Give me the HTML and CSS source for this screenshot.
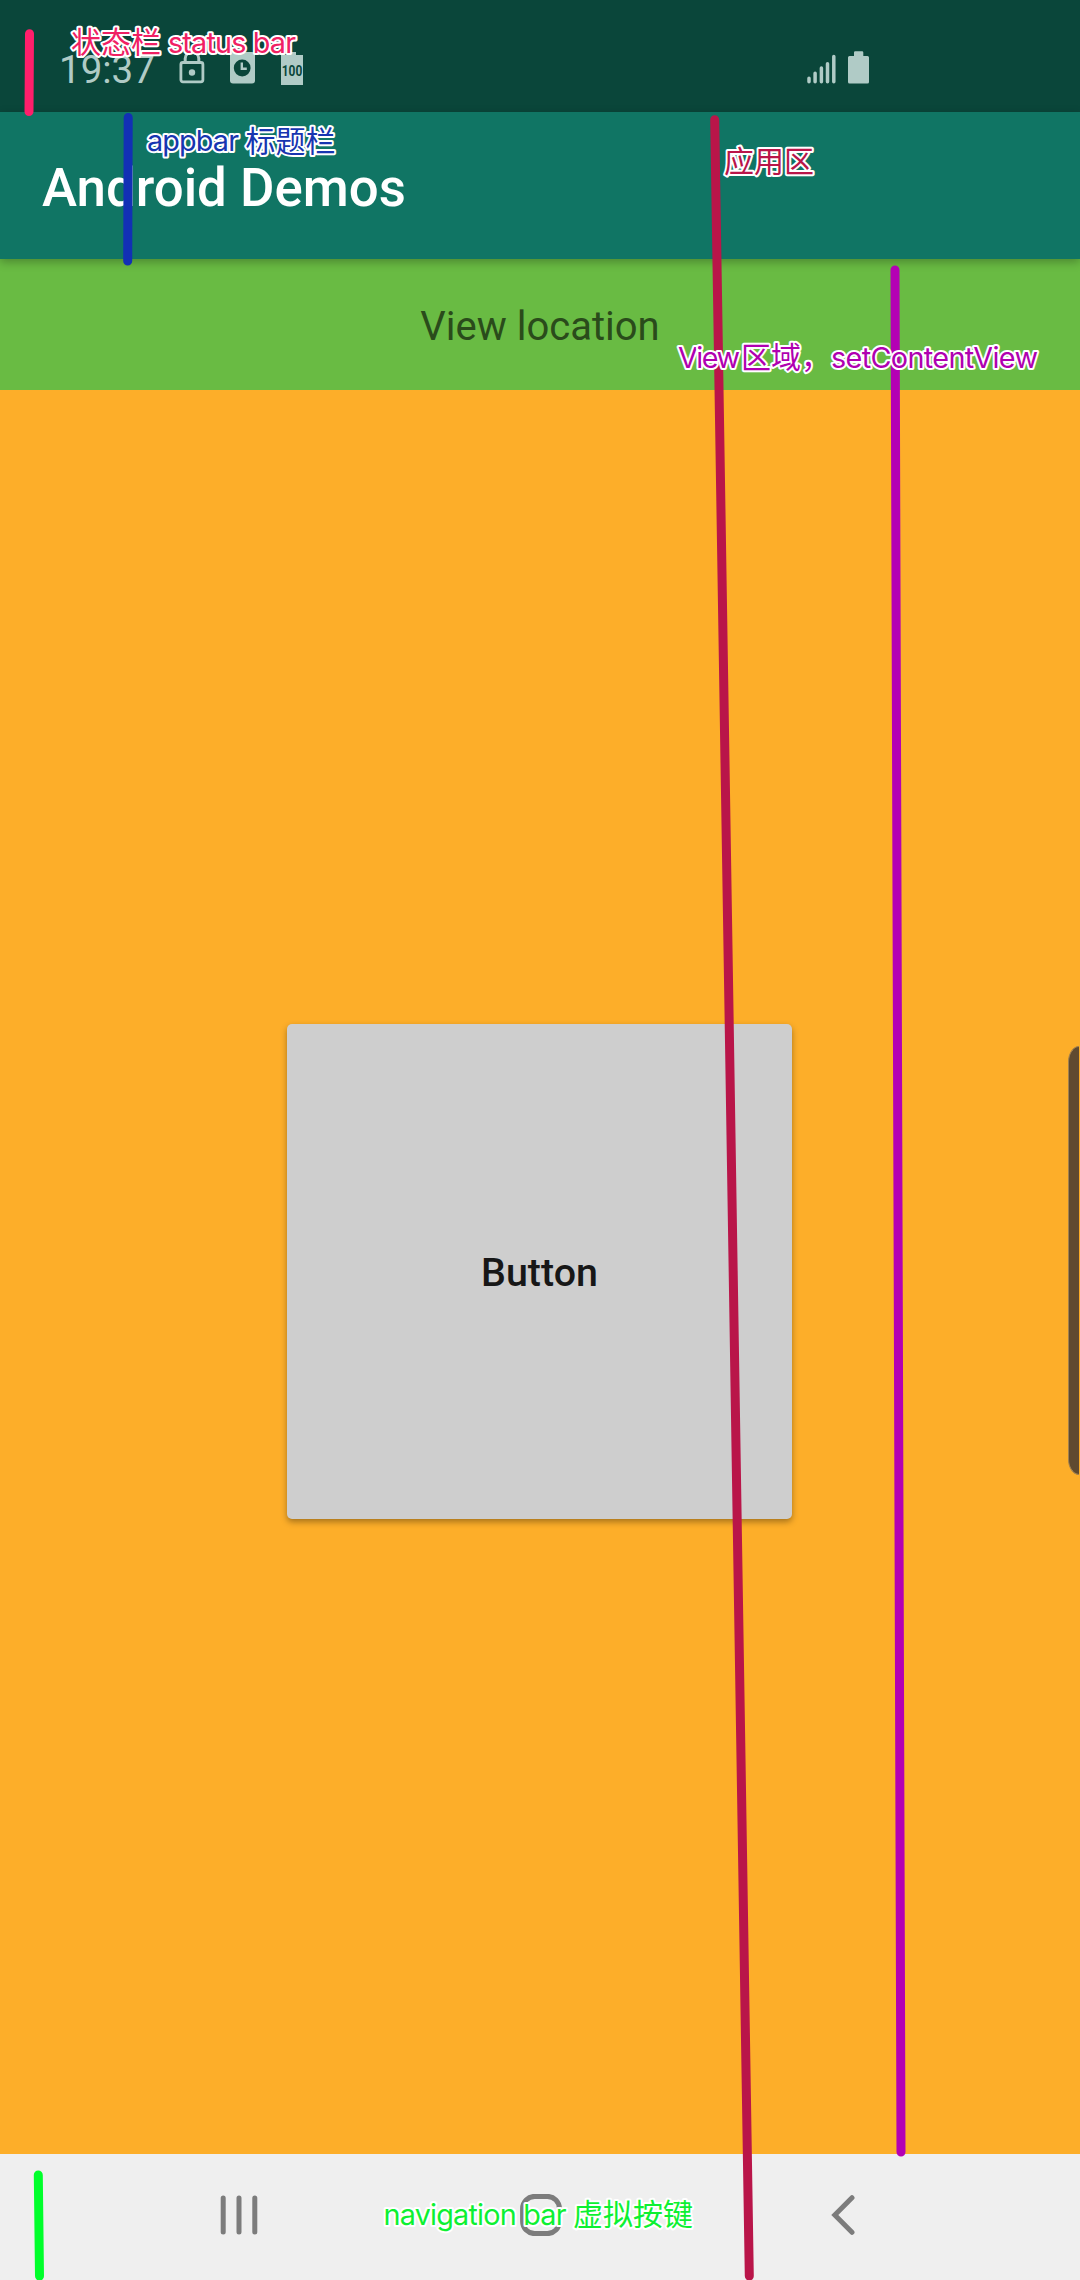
FILE: index.html
```html
<!DOCTYPE html>
<html lang="zh-CN">
<head>
<meta charset="utf-8">
<title>Android Demos</title>
<link rel="stylesheet" href="styles.css">
</head>
<body>
<div class="screen">
  <header class="status-bar">
    <span class="clock">19:37</span>
    <svg class="icon-lock" width="26" height="34" viewBox="0 0 26 34">
      <path d="M6.2 12V8.5a6.8 6.8 0 0 1 13.6 0V12" fill="none" stroke="currentColor" stroke-width="3"/>
      <rect x="1.9" y="12.5" width="22" height="19.3" rx="2" fill="none" stroke="currentColor" stroke-width="2.8"/>
      <circle cx="13" cy="22.5" r="3.2" fill="currentColor"/>
    </svg>
    <svg class="icon-alarm" width="25" height="34" viewBox="0 0 25 34">
      <rect x="0" y="2" width="25" height="31.5" rx="3" fill="currentColor"/>
      <circle cx="12.2" cy="18" r="8.4" class="cutout"/>
      <path d="M11.8 12.5v6.2h5" fill="none" stroke="currentColor" stroke-width="2.4"/>
    </svg>
    <svg class="icon-level" width="22" height="34" viewBox="0 0 22 34">
      <path d="M0 4h7V1h8v3h7v30H0z" fill="currentColor"/>
      <text x="11" y="24.500" textLength="20.500" lengthAdjust="spacingAndGlyphs" text-anchor="middle" class="level-text">100</text>
    </svg>
    <svg class="icon-signal" width="29" height="34" viewBox="0 0 29 34">
      <path d="M2 28.2v3.6M8.1 23.3v8.5M14.4 18v13.8M20.5 13.8v18M26.8 6.5v25.3" stroke="currentColor" stroke-width="3.5" stroke-linecap="round"/>
    </svg>
    <svg class="icon-battery" width="21" height="34" viewBox="0 0 21 34">
      <path d="M6 6V2.5q0-1.2 1.2-1.2h6.9q1.2 0 1.2 1.2V6H19.500q1.500 0 1.500 1.500V32q0 1.600-1.500 1.600H1.500Q0 33.600 0 32V7.500Q0 6 1.500 6z" fill="currentColor"/>
    </svg>
  </header>
  <div class="app-bar"><h1 class="app-title">Android Demos</h1></div>
  <div class="location">View location</div>
  <main class="content"><button class="big-button">Button</button></main>
  <nav class="nav-bar">
    <svg width="38" height="42" viewBox="0 0 38 42">
      <path d="M3.200 4v34M19 4v34M34.800 4v34" class="nav-stroke"/>
    </svg>
    <svg class="nav-home" width="42" height="42" viewBox="0 0 42 42">
      <rect x="2.600" y="2.400" width="36.800" height="37.200" rx="12" class="nav-stroke"/>
    </svg>
    <svg width="24" height="42" viewBox="0 0 24 42">
      <path d="M21 3.700L3.800 21 21 38.300" class="nav-stroke nav-back"/>
    </svg>
  </nav>
  <div class="edge-handle"></div>

  <svg class="notes" width="1080" height="2280" viewBox="0 0 1080 2280">
    <g class="markers">
      <path d="M29.500 33.700L29 111.500" stroke="#ff1f6b"/>
      <path d="M128.200 117.500L127.700 261" stroke="#1230b5"/>
      <path d="M714.700 119.700L749.300 2276" stroke="#b91549"/>
      <path d="M895 270L901 2152" stroke="#b400b4"/>
      <path d="M38.300 2175L39.500 2276" stroke="#00ff2b"/>
    </g>
    <g class="labels">
      <g fill="#f02063">
        <text x="71" y="53" class="han">状态栏</text>
        <text x="168" y="53" textLength="128">status bar</text>
      </g>
      <g fill="#1735b0">
        <text x="147" y="151" textLength="92">appbar</text>
        <text x="245.500" y="151.500" class="han">标题栏</text>
      </g>
      <text x="724" y="172" fill="#b91549" class="han">应用区</text>
      <g fill="#b000b0">
        <text x="678" y="368" textLength="62">View</text>
        <text x="741" y="368" class="han">区域，</text>
        <text x="831" y="368" textLength="207">setContentView</text>
      </g>
      <g fill="#0df032">
        <text x="383.500" y="2225" textLength="183">navigation bar</text>
        <text x="573" y="2225" class="han">虚拟按键</text>
      </g>
    </g>
  </svg>
</div>
</body>
</html>
```
FILE: styles.css
```css
body {
  margin: 0;
  font-family: Roboto, "Noto Sans CJK SC", sans-serif;
}

.screen {
  position: relative;
  display: flex;
  flex-direction: column;
  width: 1080px;
  height: 2280px;
  overflow: hidden;
  background: #fdae29;
}

.status-bar {
  display: flex;
  flex: none;
  align-items: flex-start;
  box-sizing: border-box;
  height: 112px;
  padding: 50px 211px 0 59px;
  background: #0a463a;
  color: #b0cbc6;
}

.clock {
  width: 120px;
  font-size: 38.500px;
  line-height: 40px;
}

.icon-alarm {
  margin-left: 25px;
}

.icon-level {
  margin: 1px 0 0 26px;
  overflow: visible;
}

.icon-signal {
  margin-left: auto;
}

.icon-battery {
  margin-left: 12px;
}

.cutout {
  fill: #0a463a;
}

.level-text {
  fill: #0a463a;
  font-size: 15.500px;
  font-weight: 700;
}

.app-bar {
  z-index: 1;
  display: flex;
  flex: none;
  align-items: center;
  box-sizing: border-box;
  height: 147px;
  padding: 5px 0 0 42px;
  background: #107564;
  box-shadow: 0 3px 9px rgba(0, 0, 0, 0.28);
}

.app-title {
  margin: 0;
  color: #fff;
  font-size: 52.800px;
  font-weight: 500;
}

.location {
  display: flex;
  flex: none;
  align-items: center;
  justify-content: center;
  box-sizing: border-box;
  height: 131px;
  padding-top: 4px;
  background: #69bb43;
  color: #2a4b1b;
  font-size: 40px;
}

.content {
  display: flex;
  flex: 1;
  align-items: flex-start;
  justify-content: center;
}

.big-button {
  width: 505px;
  height: 495px;
  margin: 634px 1px 0 0;
  padding: 3px 0 0;
  border: 0;
  border-radius: 5px;
  background: #cecece;
  box-shadow: 0 3px 6px rgba(0, 0, 0, 0.34);
  color: #171717;
  font: 500 39.400px Roboto, sans-serif;
  line-height: 48px;
}

.nav-bar {
  display: flex;
  flex: none;
  align-items: center;
  justify-content: space-between;
  box-sizing: border-box;
  height: 126px;
  padding: 0 225px 4px 220px;
  background: #efefef;
}

.nav-home {
  margin-right: 8px;
}

.nav-stroke {
  fill: none;
  stroke: #7c7c7c;
  stroke-width: 5;
  stroke-linecap: round;
}

.nav-back {
  stroke-linejoin: miter;
}

/* Edge panel handle floating over the content */
.edge-handle {
  position: absolute;
  top: 1046px;
  right: 1px;
  box-sizing: border-box;
  width: 11px;
  height: 429px;
  border: 1.500px solid #a28150;
  border-right: 0;
  border-radius: 11px 0 0 11px / 16px 0 0 16px;
  background: #5f4a30;
}

.notes {
  position: absolute;
  z-index: 2;
  top: 0;
  left: 0;
}

.markers path {
  fill: none;
  stroke-width: 9;
  stroke-linecap: round;
}

.labels text {
  font-family: Inter, "Noto Sans CJK SC", sans-serif;
  font-size: 28.800px;
  stroke: #fff;
  stroke-width: 4px;
  stroke-linejoin: round;
  paint-order: stroke;
}

.labels .han {
  font-family: "Noto Sans CJK SC", sans-serif;
  font-size: 30px;
}
```
